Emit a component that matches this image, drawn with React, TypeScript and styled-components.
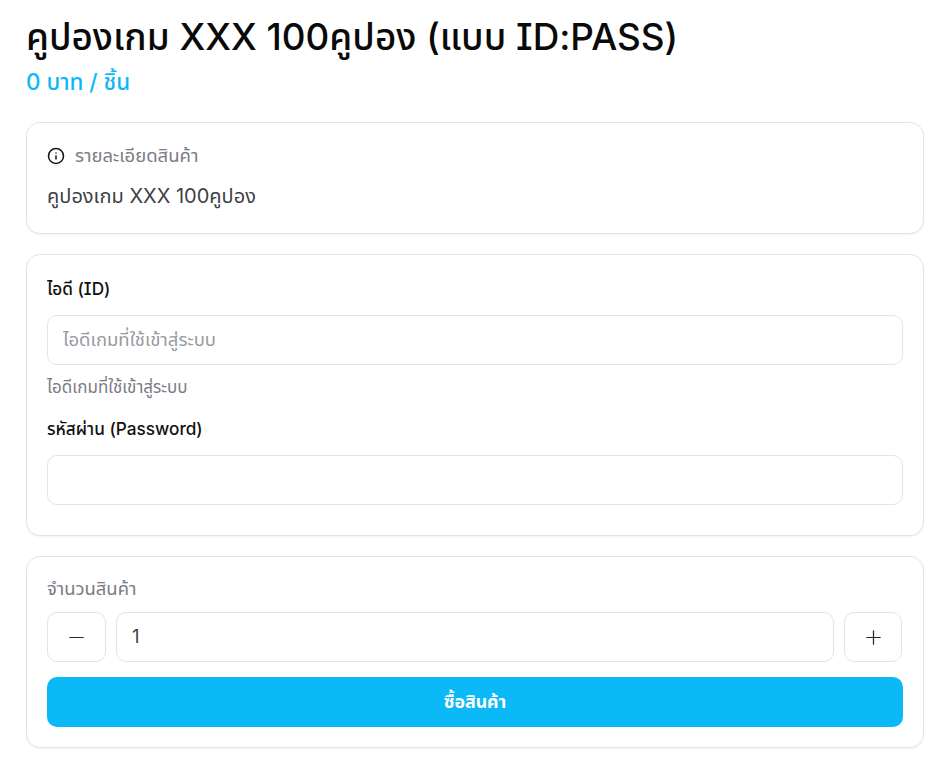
import styled, { createGlobalStyle } from "styled-components";
import { Info, Minus, Plus } from "lucide-react";

const Global = createGlobalStyle`
  html, body {
    margin: 0;
    padding: 0;
    background: #fff;
  }
  body {
    font-family: "Inter", "Noto Sans", "Noto Sans Thai", "Liberation Sans", sans-serif;
    font-feature-settings: "calt" 0, "cv08" 1;
    color: #11181c;
  }
`;

const Page = styled.div`
  display: flex;
  flex-direction: column;
  gap: 20px;
  padding: 14px 22px 27px 26px;
`;

const Header = styled.header`
  display: flex;
  flex-direction: column;
  margin-bottom: 5px;
`;

const Title = styled.h1`
  margin: 0;
  font-size: 36.8px;
  line-height: 46px;
  font-weight: 500;
  white-space: nowrap;
  color: #0a0a0a;
`;

const Price = styled.div`
  margin-top: 7px;
  font-size: 22.4px;
  line-height: 30px;
  font-weight: 500;
  color: #0cb9f7;
`;

const Card = styled.section<{ $bottom?: number }>`
  display: flex;
  flex-direction: column;
  background: #fff;
  border: 1px solid #e4e4e7;
  border-radius: 14px;
  box-shadow: 0 1px 2px rgba(0, 0, 0, 0.05);
  padding: 20px 20px ${(p) => p.$bottom ?? 20}px;
`;

const InfoRow = styled.div`
  display: flex;
  align-items: center;
  gap: 10px;
  height: 26px;
  font-size: 18.5px;
  color: #7b7b84;
  svg {
    color: #111;
    flex: none;
  }
`;

const Body = styled.div`
  margin-top: 14px;
  font-size: 20px;
  line-height: 26px;
  color: #3f3f46;
`;

const Label = styled.label`
  display: block;
  font-size: 17.2px;
  line-height: 28px;
  font-weight: 500;
  color: #111;
`;

const Input = styled.input`
  box-sizing: border-box;
  display: block;
  width: 100%;
  height: 50px;
  padding: 0 15px 2px;
  margin-top: 12px;
  background: #fff;
  border: 1px solid #e4e4e7;
  border-radius: 10px;
  font: inherit;
  font-size: 18.5px;
  color: #3f3f46;
  &::placeholder {
    color: #9a9aa2;
    opacity: 1;
  }
`;

const Help = styled.div`
  margin: 9px 0 15px;
  font-size: 17px;
  line-height: 26px;
  color: #7b7b84;
`;

const QtyLabel = styled.div`
  font-size: 18.4px;
  line-height: 22px;
  color: #7b7b84;
`;

const QtyRow = styled.div`
  display: flex;
  gap: 10px;
  margin-top: 13px;
  padding-right: 1px;
`;

const QtyButton = styled.button<{ $width: number }>`
  flex: 0 0 ${(p) => p.$width}px;
  height: 50px;
  display: flex;
  align-items: center;
  justify-content: center;
  padding: 0;
  background: #fff;
  border: 1px solid #e4e4e7;
  border-radius: 10px;
  color: #27272a;
`;

const QtyInput = styled(Input)`
  flex: 1;
  margin-top: 0;
  width: auto;
  min-width: 0;
`;

const BuyButton = styled.button`
  height: 50px;
  margin-top: 15px;
  background: #0cb9f7;
  border: 0;
  border-radius: 10px;
  font: inherit;
  font-size: 17.8px;
  font-weight: 700;
  color: #fff;
`;

export default function App() {
  return (
    <>
      <Global />
      <Page>
        <Header>
          <Title>คูปองเกม XXX 100คูปอง (แบบ ID:PASS)</Title>
          <Price>0 บาท / ชิ้น</Price>
        </Header>

        <Card $bottom={24}>
          <InfoRow>
            <Info size={18} strokeWidth={2} />
            รายละเอียดสินค้า
          </InfoRow>
          <Body>คูปองเกม XXX 100คูปอง</Body>
        </Card>

        <Card $bottom={30}>
          <Label>ไอดี (ID)</Label>
          <Input placeholder="ไอดีเกมที่ใช้เข้าสู่ระบบ" />
          <Help>ไอดีเกมที่ใช้เข้าสู่ระบบ</Help>
          <Label>รหัสผ่าน (Password)</Label>
          <Input />
        </Card>

        <Card>
          <QtyLabel>จำนวนสินค้า</QtyLabel>
          <QtyRow>
            <QtyButton $width={59}>
              <Minus size={23} strokeWidth={1.3} />
            </QtyButton>
            <QtyInput defaultValue="1" />
            <QtyButton $width={58}>
              <Plus size={23} strokeWidth={1.3} />
            </QtyButton>
          </QtyRow>
          <BuyButton>ซื้อสินค้า</BuyButton>
        </Card>
      </Page>
    </>
  );
}
